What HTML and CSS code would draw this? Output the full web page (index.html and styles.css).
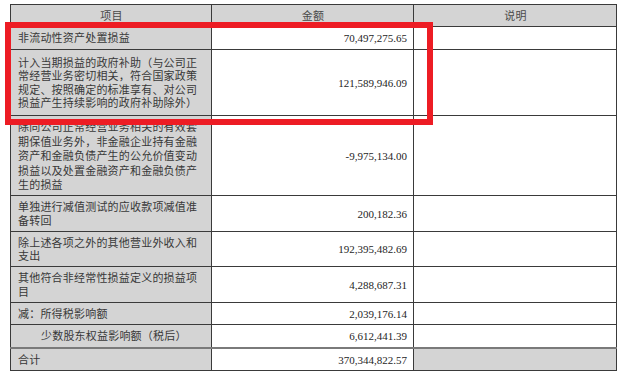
FILE: index.html
```html
<!DOCTYPE html>
<html lang="zh-CN">
<head>
<meta charset="utf-8">
<title>非经常性损益项目</title>
<link rel="stylesheet" href="styles.css">
</head>
<body>
<div class="page">
  <table class="gl">
    <colgroup>
      <col class="c1"><col class="c2"><col class="c3">
    </colgroup>
    <thead>
      <tr class="h-head">
        <th>项目</th><th>金额</th><th>说明</th>
      </tr>
    </thead>
    <tbody>
      <tr class="h23"><td class="item">非流动性资产处置损益</td><td class="num">70,497,275.65</td><td></td></tr>
      <tr class="h66"><td class="item">计入当期损益的政府补助（与公司正常经营业务密切相关，符合国家政策规定、按照确定的标准享有、对公司损益产生持续影响的政府补助除外）</td><td class="num">121,589,946.09</td><td></td></tr>
      <tr class="h80"><td class="item loose">除同公司正常经营业务相关的有效套期保值业务外，非金融企业持有金融资产和金融负债产生的公允价值变动损益以及处置金融资产和金融负债产生的损益</td><td class="num">-9,975,134.00</td><td></td></tr>
      <tr class="h36"><td class="item">单独进行减值测试的应收款项减值准备转回</td><td class="num">200,182.36</td><td></td></tr>
      <tr class="h35"><td class="item">除上述各项之外的其他营业外收入和支出</td><td class="num">192,395,482.69</td><td></td></tr>
      <tr class="h36"><td class="item">其他符合非经常性损益定义的损益项目</td><td class="num">4,288,687.31</td><td></td></tr>
      <tr class="h22"><td class="item">减：所得税影响额</td><td class="num">2,039,176.14</td><td></td></tr>
      <tr class="h23"><td class="item indent">少数股东权益影响额（税后）</td><td class="num">6,612,441.39</td><td></td></tr>
      <tr class="h22 total"><td class="item">合计</td><td class="num">370,344,822.57</td><td class="shade"></td></tr>
    </tbody>
  </table>
  <div class="highlight"></div>
</div>
</body>
</html>
```

FILE: styles.css
```css
html, body {
  margin: 0;
  padding: 0;
  background: #ffffff;
}

.page {
  position: relative;
  width: 640px;
  height: 376px;
  padding: 4px 0 0 10px;
  box-sizing: border-box;
}

.gl {
  border-collapse: collapse;
  table-layout: fixed;
  width: 606px;
  font-family: "Noto Sans CJK SC", "Liberation Serif", serif;
  font-size: 11px;
  color: #333333;
}

.c1 { width: 201px; }
.c2 { width: 202px; }
.c3 { width: 203px; }

.gl th,
.gl td {
  border: 1px solid #3a3a3a;
  padding: 0 6px 0 7px;
  vertical-align: middle;
}

.gl th {
  background: #d4d4d4;
  font-weight: normal;
  color: #4a4a4a;
  text-align: center;
  letter-spacing: 0.2px;
  line-height: 13px;
}

.h-head th { height: 21px; }
.h22 td { height: 21px; }
.h23 td { height: 22px; }
.h35 td { height: 34px; }
.h36 td { height: 35px; }
.h66 td { height: 65px; }
.h80 td { height: 79px; }

.item {
  background: #d4d4d4;
  line-height: 13.2px;
  letter-spacing: 0.2px;
  color: #383838;
}

.item.loose {
  line-height: 14.4px;
}

.item.indent {
  padding-left: 30px;
}

.num {
  text-align: right;
  font-family: "Liberation Serif", "Times New Roman", serif;
  font-size: 11px;
  color: #1e1e1e;
}

.total td {
  border-top: 2px solid #7a7a7a;
}

.shade {
  background: #d4d4d4;
}

.highlight {
  position: absolute;
  left: 5px;
  top: 22px;
  width: 428px;
  height: 103px;
  box-sizing: border-box;
  border: 6px solid #ed1c24;
}
```
